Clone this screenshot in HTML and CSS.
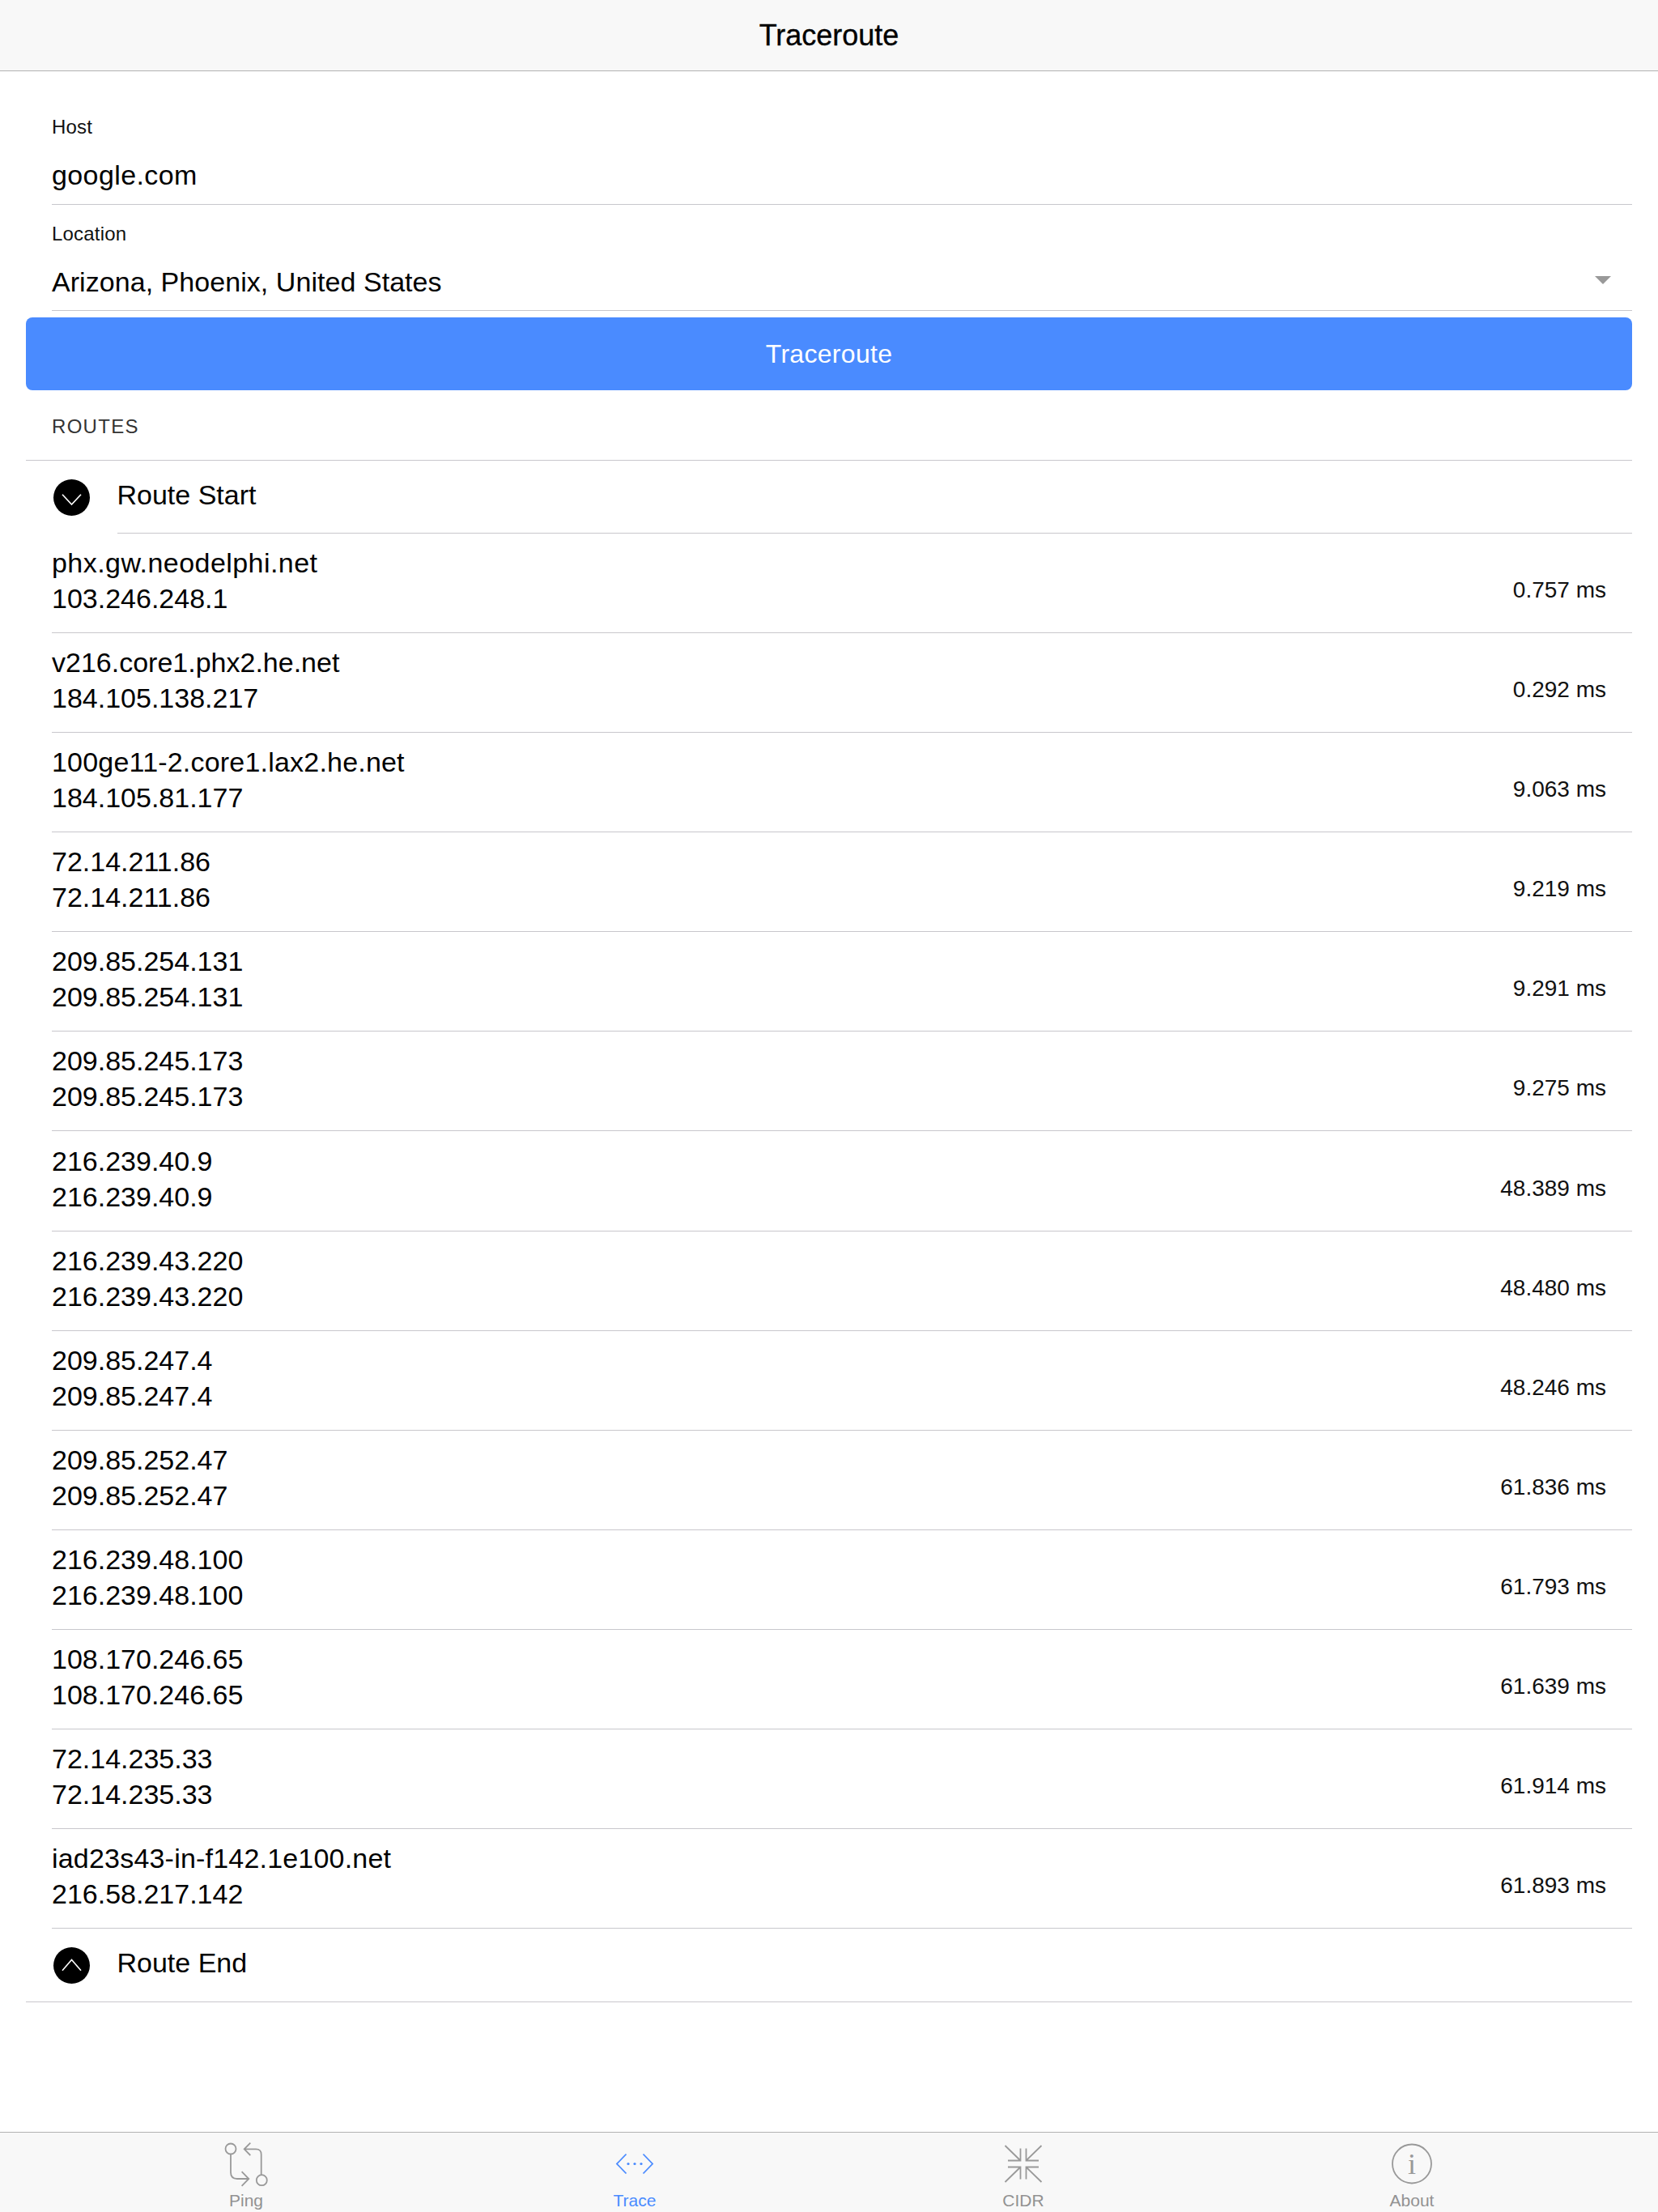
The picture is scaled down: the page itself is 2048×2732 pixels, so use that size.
FILE: index.html
```html
<!DOCTYPE html>
<html lang="en">
<head>
<meta charset="utf-8">
<title>Traceroute</title>
<link rel="stylesheet" href="styles.css">
</head>
<body>
<div class="app">
  <header class="navbar"><h1 class="navbar-title">Traceroute</h1></header>
  <main class="content">
    <form class="form">
      <div class="field field-host">
        <label class="field-label">Host</label>
        <div class="field-value field-text">google.com</div>
      </div>
      <div class="field field-location">
        <label class="field-label">Location</label>
        <div class="field-value field-select"><span>Arizona, Phoenix, United States</span><i class="caret"></i></div>
      </div>
    </form>
    <button class="primary-btn" type="button">Traceroute</button>
    <div class="section-title">ROUTES</div>
    <ul class="routes">
      <li class="route-cap route-cap-start">
        <span class="cap-icon"><svg viewBox="0 0 45 45" width="45" height="45"><path d="M11 18.7 L22.5 31 L34 18.7"/></svg></span>
        <span class="cap-label">Route Start</span>
      </li>
      <li class="hop"><div class="hop-names"><div class="hop-host-wide">phx.gw.neodelphi.net</div><div>103.246.248.1</div></div><div class="hop-time">0.757 ms</div></li>
      <li class="hop"><div class="hop-names"><div>v216.core1.phx2.he.net</div><div>184.105.138.217</div></div><div class="hop-time">0.292 ms</div></li>
      <li class="hop"><div class="hop-names"><div class="hop-host">100ge11-2.core1.lax2.he.net</div><div>184.105.81.177</div></div><div class="hop-time">9.063 ms</div></li>
      <li class="hop"><div class="hop-names"><div>72.14.211.86</div><div>72.14.211.86</div></div><div class="hop-time">9.219 ms</div></li>
      <li class="hop"><div class="hop-names"><div>209.85.254.131</div><div>209.85.254.131</div></div><div class="hop-time">9.291 ms</div></li>
      <li class="hop"><div class="hop-names"><div>209.85.245.173</div><div>209.85.245.173</div></div><div class="hop-time">9.275 ms</div></li>
      <li class="hop"><div class="hop-names"><div>216.239.40.9</div><div>216.239.40.9</div></div><div class="hop-time">48.389 ms</div></li>
      <li class="hop"><div class="hop-names"><div>216.239.43.220</div><div>216.239.43.220</div></div><div class="hop-time">48.480 ms</div></li>
      <li class="hop"><div class="hop-names"><div>209.85.247.4</div><div>209.85.247.4</div></div><div class="hop-time">48.246 ms</div></li>
      <li class="hop"><div class="hop-names"><div>209.85.252.47</div><div>209.85.252.47</div></div><div class="hop-time">61.836 ms</div></li>
      <li class="hop"><div class="hop-names"><div>216.239.48.100</div><div>216.239.48.100</div></div><div class="hop-time">61.793 ms</div></li>
      <li class="hop"><div class="hop-names"><div>108.170.246.65</div><div>108.170.246.65</div></div><div class="hop-time">61.639 ms</div></li>
      <li class="hop"><div class="hop-names"><div>72.14.235.33</div><div>72.14.235.33</div></div><div class="hop-time">61.914 ms</div></li>
      <li class="hop"><div class="hop-names"><div class="hop-host">iad23s43-in-f142.1e100.net</div><div>216.58.217.142</div></div><div class="hop-time">61.893 ms</div></li>
      <li class="route-cap route-cap-end">
        <span class="cap-icon"><svg viewBox="0 0 45 45" width="45" height="45"><path d="M11 28.7 L22.5 15.5 L34 28.7"/></svg></span>
        <span class="cap-label">Route End</span>
      </li>
    </ul>
  </main>
  <nav class="tabbar">
    <a class="tab">
      <svg class="tab-icon" viewBox="0 0 54 54" width="54" height="54">
        <circle cx="8" cy="7" r="6.5"/>
        <circle cx="46.3" cy="45.7" r="6.5"/>
        <path d="M8 13.5 V36 Q8 44 16 44 H30.3 M21.6 35.2 L30.3 44 L21.6 52.8"/>
        <path d="M45.7 39.2 V14 Q45.7 7.3 39 7.3 H24.7 M32.3 -0.3 L24.7 7.3 L32.3 15"/>
      </svg>
      <span class="tab-label">Ping</span>
    </a>
    <a class="tab tab-active">
      <svg class="tab-icon" viewBox="0 1.5 54 54" width="54" height="54">
        <path d="M16.5 15 L5 27 L16.5 39 M37.5 15 L49 27 L37.5 39"/>
        <circle class="dot" cx="19" cy="27" r="1.6"/>
        <circle class="dot" cx="27" cy="27" r="1.6"/>
        <circle class="dot" cx="35" cy="27" r="1.6"/>
      </svg>
      <span class="tab-label">Trace</span>
    </a>
    <a class="tab">
      <svg class="tab-icon" viewBox="0 1.5 54 54" width="54" height="54">
        <path d="M4.5 4.5 L23.5 23 M8 23 H23.5 V8"/>
        <path d="M49.5 4.5 L30.5 23 M46 23 H30.5 V8"/>
        <path d="M4.5 49.5 L23.5 31 M8 31 H23.5 V46"/>
        <path d="M49.5 49.5 L30.5 31 M46 31 H30.5 V46"/>
      </svg>
      <span class="tab-label">CIDR</span>
    </a>
    <a class="tab">
      <svg class="tab-icon" viewBox="0 1.5 54 54" width="54" height="54">
        <circle cx="27" cy="27" r="24"/>
        <text class="info-i" x="27" y="39" text-anchor="middle">i</text>
      </svg>
      <span class="tab-label">About</span>
    </a>
  </nav>
</div>
</body>
</html>
```
FILE: styles.css
```css
* { box-sizing: border-box; }
html, body { margin: 0; padding: 0; background: #fff; }
body { font-family: "Liberation Sans", Arial, sans-serif; color: #000; }
.app { width: 2048px; height: 2732px; display: flex; flex-direction: column; overflow: hidden; }

.navbar { height: 88px; flex: none; background: #f8f8f8; border-bottom: 1px solid #b2b2b2; padding-top: 1px; display: flex; align-items: center; justify-content: center; }
.navbar-title { margin: 0; font-size: 36px; font-weight: 400; line-height: 1; -webkit-text-stroke: 0.35px #000; }

.content { flex: 1; padding: 0 32px; }
.field { margin-left: 32px; border-bottom: 1px solid #c8c7cc; }
.field-host { height: 165px; padding-top: 54px; }
.field-location { height: 131px; padding-top: 21px; }
.field-label { display: block; font-size: 24px; line-height: 30px; letter-spacing: 0.2px; color: #111; }
.field-value { font-size: 34px; line-height: 44px; margin-top: 22px; display: flex; justify-content: space-between; align-items: center; }
.field-text { letter-spacing: 0.4px; }
.field-select { padding-right: 26px; letter-spacing: 0.05px; }
.caret { width: 0; height: 0; margin-bottom: 4px; border-left: 10px solid transparent; border-right: 10px solid transparent; border-top: 10px solid #999; }

.primary-btn { display: block; width: 100%; height: 90px; margin: 8px 0 0; border: 0; border-radius: 8px; background: #4a8bff; color: #fff; font: 32px/1 "Liberation Sans", Arial, sans-serif; letter-spacing: 0.3px; }

.section-title { margin-left: 32px; height: 86px; padding-top: 30px; font-size: 24px; letter-spacing: 1.3px; line-height: 30px; color: #333; }

.routes { list-style: none; margin: 0; padding: 0; border-top: 1px solid #c8c7cc; }
.route-cap { display: flex; align-items: center; position: relative; padding-left: 33.5px; }
.route-cap-start { height: 90px; }
.route-cap-end { height: 91px; border-bottom: 1px solid #c8c7cc; }
.route-cap-start::after { content: ""; position: absolute; left: 113px; right: 0; bottom: 0; height: 1px; background: #c8c7cc; }
.cap-icon { width: 45px; height: 45px; border-radius: 50%; background: #000; flex: none; margin-right: 34px; }
.cap-icon svg { display: block; fill: none; stroke: #fff; stroke-width: 1.6; }
.cap-label { font-size: 34px; line-height: 44px; padding-bottom: 6px; }

.hop { height: 123.08px; margin-left: 32px; padding-right: 32px; border-bottom: 1px solid #c8c7cc; display: flex; justify-content: space-between; align-items: center; }
.hop-names { font-size: 34px; line-height: 44px; padding-bottom: 6px; }
.hop-host { letter-spacing: 0.2px; }
.hop-host-wide { letter-spacing: 0.45px; }
.hop-time { font-size: 28px; line-height: 34px; color: #111; padding-top: 18px; }

.tabbar { height: 99px; flex: none; background: #f8f8f8; border-top: 1px solid #b2b2b2; padding: 0 64px; display: grid; grid-template-columns: repeat(4, 480px); }
.tab { display: flex; flex-direction: column; align-items: center; padding-top: 13px; color: #929292; }
.tab-icon { display: block; fill: none; stroke: #999; stroke-width: 1.8; overflow: visible; }
.tab-label { font-size: 21px; line-height: 24px; margin-top: 5px; }
.tab-active { color: #4a8bff; }
.tab-active .tab-icon { stroke: #4a8bff; }
.tab-active .dot { fill: #4a8bff; stroke: none; }
.info-i { font-family: "Liberation Serif", serif; font-size: 36px; fill: #999; stroke: none; }
```
